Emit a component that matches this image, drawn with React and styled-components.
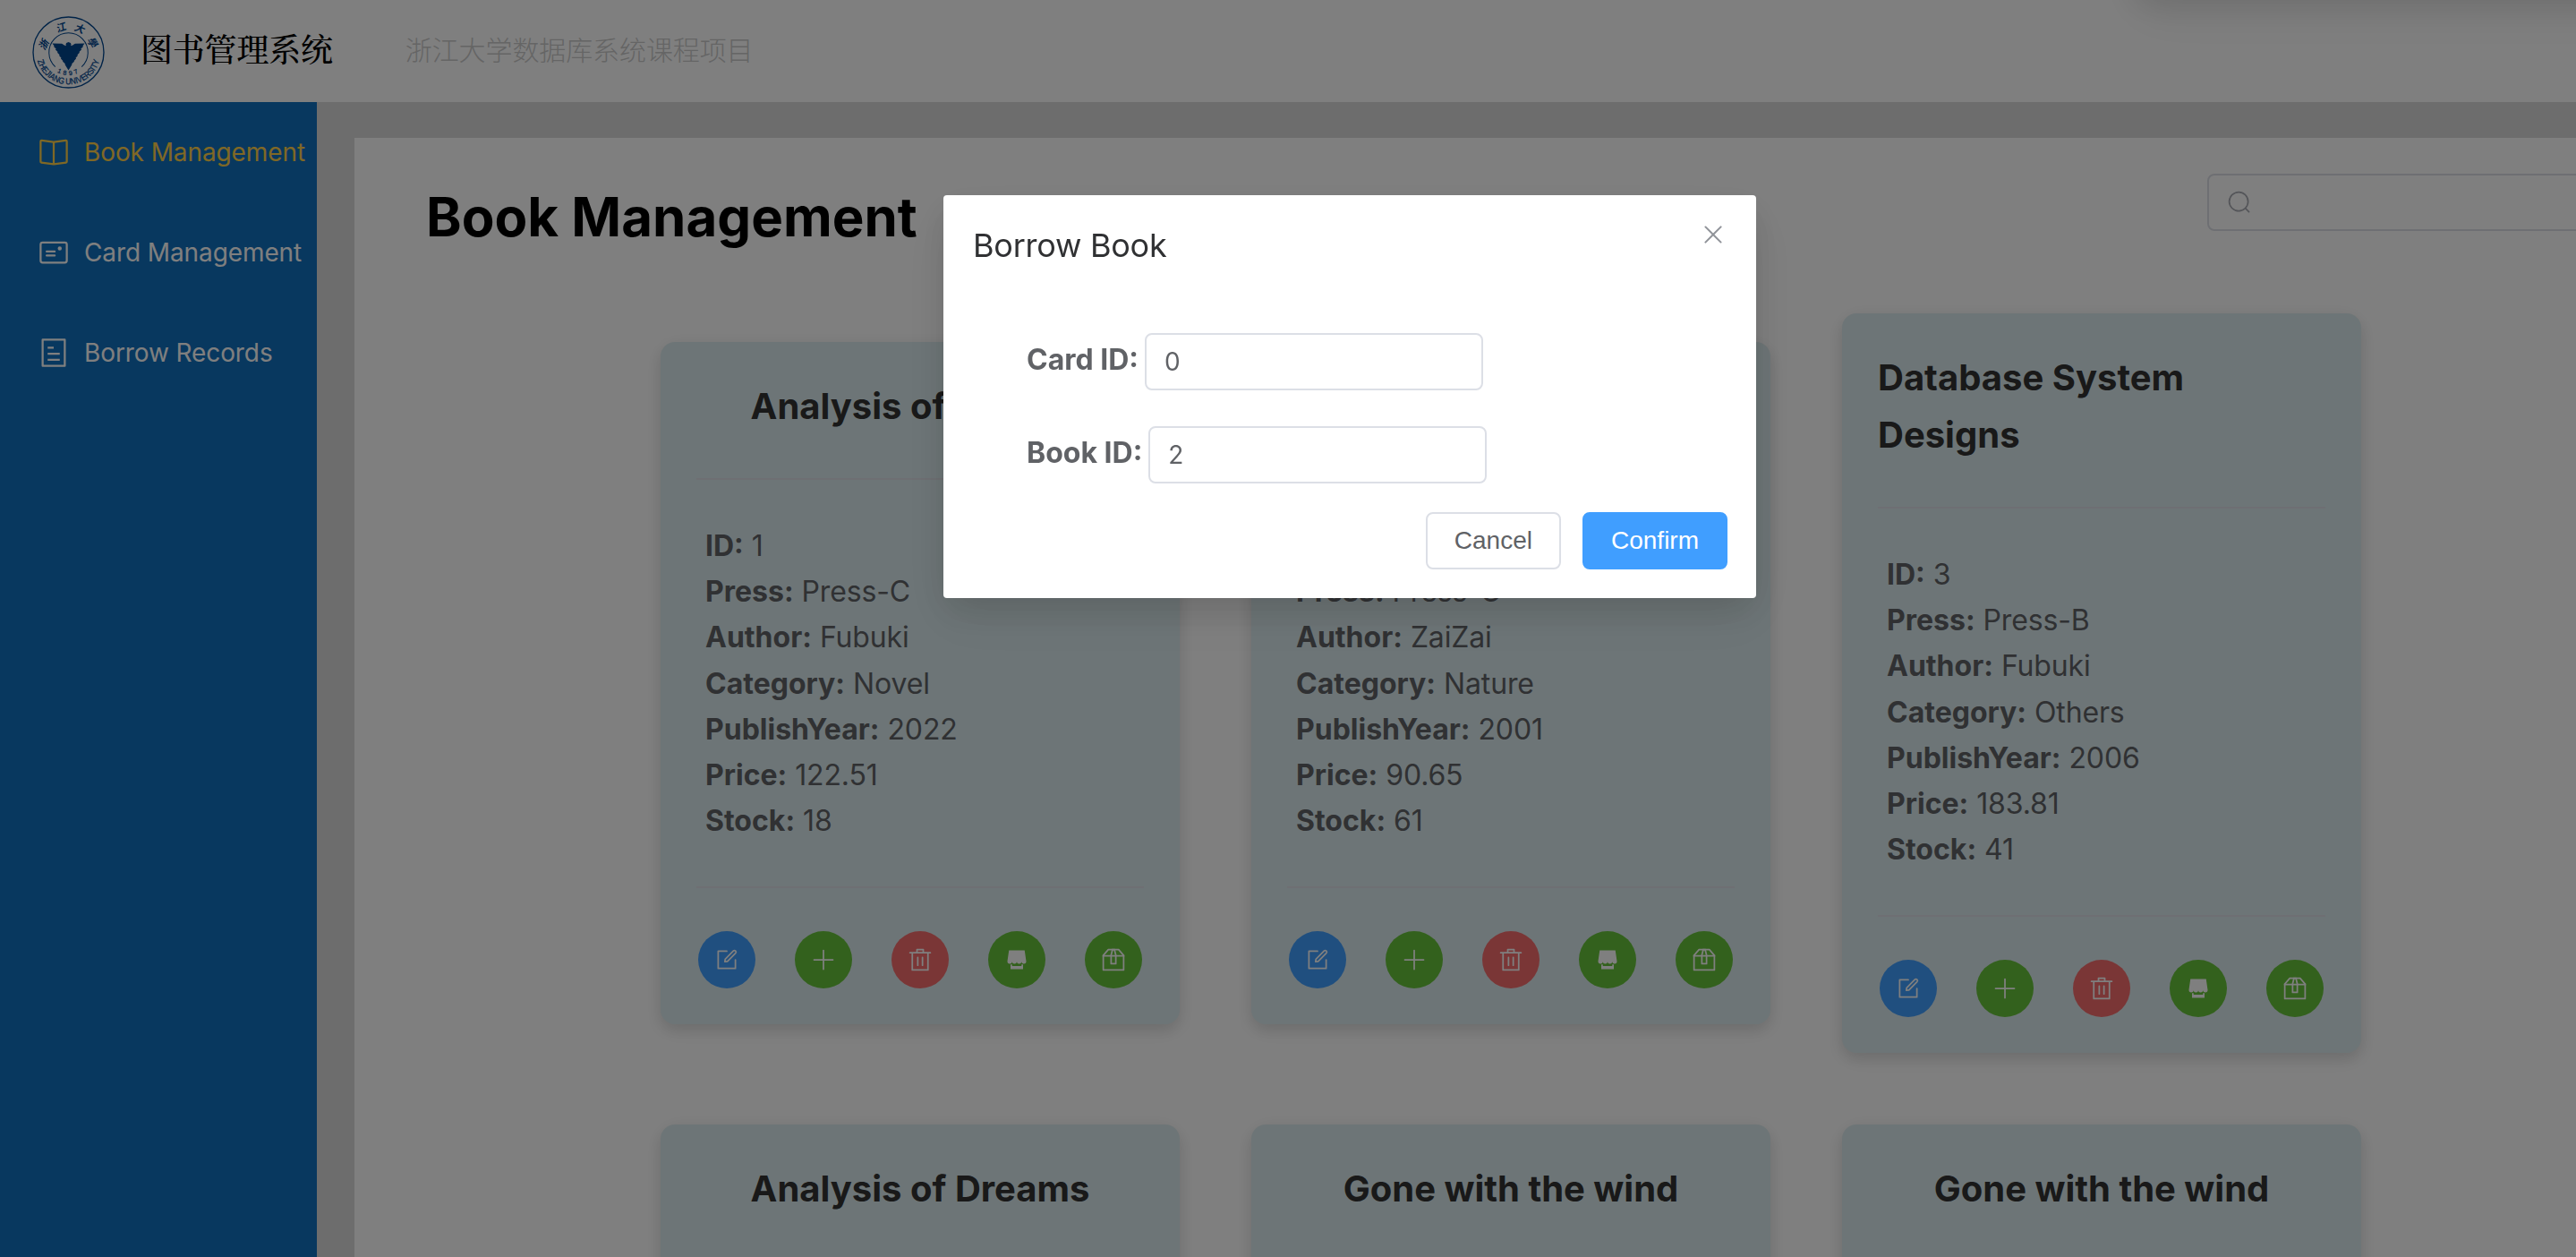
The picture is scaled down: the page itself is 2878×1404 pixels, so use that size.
import React from "react";
import styled, { createGlobalStyle } from "styled-components";

const GlobalStyle = createGlobalStyle`
  * { box-sizing: border-box; }
  body {
    margin: 0;
    overflow: hidden;
    font-family: Inter, "Noto Sans CJK SC", sans-serif;
    -webkit-font-smoothing: antialiased;
  }
`;

const ICONS = {
  reading: [
    "m512 863.36 384-54.848v-638.72L525.568 222.72a96 96 0 0 1-27.136 0L128 169.792v638.72zM137.024 106.432l370.432 52.928a32 32 0 0 0 9.088 0l370.432-52.928A64 64 0 0 1 960 169.792v638.72a64 64 0 0 1-54.976 63.36l-388.48 55.488a32 32 0 0 1-9.088 0l-388.48-55.488A64 64 0 0 1 64 808.512v-638.72a64 64 0 0 1 73.024-63.36z",
    "M480 192h64v704h-64z",
  ],
  postcard: [
    "M160 224a32 32 0 0 0-32 32v512a32 32 0 0 0 32 32h704a32 32 0 0 0 32-32V256a32 32 0 0 0-32-32zm0-64h704a96 96 0 0 1 96 96v512a96 96 0 0 1-96 96H160a96 96 0 0 1-96-96V256a96 96 0 0 1 96-96z",
    "M704 320a64 64 0 1 1 0 128 64 64 0 0 1 0-128zM288 448h256q32 0 32 32t-32 32H288q-32 0-32-32t32-32zm0 128h256q32 0 32 32t-32 32H288q-32 0-32-32t32-32z",
  ],
  tickets: [
    "M192 128v768h640V128zm-32-64h704a32 32 0 0 1 32 32v832a32 32 0 0 1-32 32H160a32 32 0 0 1-32-32V96a32 32 0 0 1 32-32zm160 448h384v64H320zm0-192h192v64H320zm0 384h384v64H320z",
  ],
  search: [
    "m795.904 750.72 124.992 124.928a32 32 0 0 1-45.248 45.248L750.656 795.904a416 416 0 1 1 45.248-45.248zM480 832a352 352 0 1 0 0-704 352 352 0 0 0 0 704z",
  ],
  close: [
    "M764.288 214.592 512 466.88 259.712 214.592a31.936 31.936 0 0 0-45.12 45.12L466.752 512 214.528 764.224a31.936 31.936 0 1 0 45.12 45.184L512 557.184l252.288 252.288a31.936 31.936 0 0 0 45.12-45.12L557.12 512.064l252.288-252.352a31.936 31.936 0 1 0-45.12-45.184z",
  ],
  edit: [
    "M832 512a32 32 0 1 1 64 0v352a32 32 0 0 1-32 32H160a32 32 0 0 1-32-32V160a32 32 0 0 1 32-32h352a32 32 0 0 1 0 64H192v640h640z",
    "m469.952 554.24 52.8-7.552L847.104 222.4a32 32 0 1 0-45.248-45.248L477.44 501.44l-7.552 52.8zm422.4-422.4a96 96 0 0 1 0 135.808l-331.84 331.84a32 32 0 0 1-18.112 9.088L436.8 623.68a32 32 0 0 1-36.224-36.224l15.104-105.6a32 32 0 0 1 9.024-18.112l331.904-331.84a96 96 0 0 1 135.744 0z",
  ],
  plus: [
    "M480 480V128a32 32 0 0 1 64 0v352h352a32 32 0 1 1 0 64H544v352a32 32 0 1 1-64 0V544H128a32 32 0 0 1 0-64z",
  ],
  trash: [
    "M160 256H96a32 32 0 0 1 0-64h256V95.936a32 32 0 0 1 32-32h256a32 32 0 0 1 32 32V192h256a32 32 0 1 1 0 64h-64v672a32 32 0 0 1-32 32H192a32 32 0 0 1-32-32zm448-64v-64H416v64zM224 896h576V256H224zm192-128a32 32 0 0 1-32-32V416a32 32 0 0 1 64 0v320a32 32 0 0 1-32 32zm192 0a32 32 0 0 1-32-32V416a32 32 0 0 1 64 0v320a32 32 0 0 1-32 32z",
  ],
  shop: [
    "M704 704h64v192H256V704h64v64h384zm188.544-152.192C894.528 559.616 896 567.616 896 576a96 96 0 1 1-192 0 96 96 0 1 1-192 0 96 96 0 1 1-192 0 96 96 0 1 1-192 0c0-8.384 1.408-16.384 3.392-24.192L192 128h640z",
  ],
  box: [
    "M317.056 128 128 344.064V896h768V344.064L706.944 128zm-14.528-64h418.944a32 32 0 0 1 24.064 10.88l206.528 236.096A32 32 0 0 1 960 332.032V928a32 32 0 0 1-32 32H96a32 32 0 0 1-32-32V332.032a32 32 0 0 1 7.936-21.12L278.4 75.008A32 32 0 0 1 302.528 64z",
    "M64 320h896v64H64z",
    "M448 327.872V640h128V327.872L526.08 128h-28.16zM448 64h128l64 256v352a32 32 0 0 1-32 32H416a32 32 0 0 1-32-32V320z",
  ],
};

const Glyph = styled.svg`
  width: ${(p) => p.$size}px;
  height: ${(p) => p.$size}px;
  fill: currentColor;
  flex: none;
  display: block;
`;

function Icon({ name, size = 28 }) {
  return (
    <Glyph viewBox="0 0 1024 1024" $size={size} aria-hidden="true">
      {ICONS[name].map((d) => (
        <path key={d} d={d} />
      ))}
    </Glyph>
  );
}

const Page = styled.div`
  width: 100vw;
  height: 100vh;
  overflow: hidden;
  display: flex;
  flex-direction: column;
  background: #fff;
`;

const TopBar = styled.header`
  height: 114px;
  flex: none;
  display: flex;
  align-items: center;
  padding-left: 36px;
  background: #fff;
`;

const Emblem = styled.svg`
  width: 81px;
  height: 81px;
  margin-top: 2px;
  flex: none;
  color: #00468f;
`;

const SystemName = styled.span`
  margin: 0 0 7px 40px;
  font-family: "Songti SC", "Noto Serif CJK SC", "Noto Sans CJK SC", serif;
  font-size: 36px;
  line-height: 50px;
  letter-spacing: -0.2px;
  font-weight: 500;
  color: #000;
  white-space: nowrap;
`;

const CourseName = styled.span`
  margin: 0 0 7px 81px;
  font-family: "Noto Sans CJK SC", sans-serif;
  font-size: 30px;
  line-height: 44px;
  letter-spacing: -0.1px;
  font-weight: 300;
  color: #cacaca;
  white-space: nowrap;
`;

const Body = styled.div`
  flex: 1;
  min-height: 0;
  display: flex;
  background: #dadada;
`;

const SideMenu = styled.nav`
  width: 354px;
  flex: none;
  background: #1070be;
`;

const MenuItem = styled.a`
  height: 112px;
  display: flex;
  align-items: center;
  padding-left: 42px;
  gap: 16px;
  font-size: 28px;
  letter-spacing: -0.1px;
  white-space: nowrap;
  color: ${(p) => (p.$active ? "#ffd04b" : "#fff")};
`;

const Content = styled.main`
  width: 2584px;
  flex: none;
  margin: 40px 0 0 42px;
  background: #fff;
`;

const PageHead = styled.div`
  height: 156px;
  display: flex;
  justify-content: space-between;
  padding: 40px 94px 0 80px;
`;

const Heading = styled.h1`
  margin: 12px 0 0;
  font-size: 60px;
  line-height: 72px;
  font-weight: 700;
  color: #000;
  white-space: nowrap;
`;

const SearchBox = styled.div`
  width: 420px;
  height: 64px;
  display: flex;
  align-items: center;
  padding-left: 20px;
  border: 2px solid #dcdfe6;
  border-radius: 8px;
  color: #a8abb2;
`;

const CardGrid = styled.div`
  display: grid;
  grid-template-columns: repeat(3, 580px);
  justify-content: center;
  align-items: center;
  gap: 80px;
  padding-top: 40px;
`;

const Card = styled.article`
  padding: 40px;
  display: flex;
  flex-direction: column;
  border-radius: 16px;
  background: #dbebee;
  box-shadow: 0 8px 16px rgba(0, 0, 0, 0.1), 0 4px 24px rgba(0, 0, 0, 0.06);
`;

const CardTitle = styled.h2`
  margin: 0;
  align-self: center;
  font-size: 40px;
  line-height: 64px;
  font-weight: 700;
  color: #333;
`;

const Divider = styled.div`
  height: 2px;
  margin: 48px 0;
  background: #dcdfe6;
`;

const Details = styled.dl`
  margin: 0;
  padding-left: 10px;
  font-size: 32px;
  line-height: 51.2px;
  color: #606266;
`;

const Detail = styled.div`
  dt {
    display: inline;
    font-weight: 700;
  }
  dd {
    display: inline;
    margin: 0;
    letter-spacing: -0.15px;
  }
`;

const Actions = styled.div`
  display: flex;
  justify-content: center;
  gap: 44px;
`;

const TONES = { primary: "#409eff", success: "#67c23a", danger: "#f56c6c" };

const RoundButton = styled.button`
  width: 64px;
  height: 64px;
  padding: 0;
  display: flex;
  align-items: center;
  justify-content: center;
  border: 0;
  border-radius: 50%;
  background: ${(p) => TONES[p.$tone]};
  color: #fff;
`;

const Overlay = styled.div`
  position: fixed;
  inset: 0;
  display: flex;
  justify-content: flex-start;
  align-items: flex-start;
  padding: 218px 0 0 1054px;
  background: rgba(0, 0, 0, 0.5);
`;

const Dialog = styled.section`
  width: 908px;
  height: 450px;
  display: flex;
  flex-direction: column;
  padding: 32px;
  border-radius: 4px;
  background: #fff;
  box-shadow: 0 24px 64px 8px rgba(0, 0, 0, 0.04), 0 16px 40px rgba(0, 0, 0, 0.08),
    0 16px 48px rgba(0, 0, 0, 0.06);
`;

const DialogHead = styled.div`
  display: flex;
  justify-content: space-between;
  flex: none;
  height: 122px;
`;

const DialogTitle = styled.h3`
  margin: 0;
  padding-left: 1px;
  font-size: 36px;
  line-height: 48px;
  letter-spacing: -0.25px;
  font-weight: 400;
  color: #303133;
`;

const CloseButton = styled.button`
  width: 32px;
  height: 32px;
  margin: -4px 0 0;
  padding: 0;
  border: 0;
  background: none;
  color: #909399;
`;

const Field = styled.label`
  display: flex;
  flex: none;
  gap: 7px;
  height: 64px;
  margin: 0 0 40px 61px;
  font-size: 32px;
  line-height: 60px;
  font-weight: 700;
  color: #606266;
  white-space: nowrap;
`;

const TextInput = styled.input`
  width: 378px;
  height: 64px;
  padding: 0 20px;
  border: 2px solid #dcdfe6;
  border-radius: 8px;
  outline: none;
  font-family: inherit;
  font-size: 28px;
  color: #606266;
  background: #fff;
`;

const DialogFoot = styled.div`
  display: flex;
  justify-content: flex-end;
  flex: none;
  gap: 24px;
  margin-top: -8px;
`;

const Button = styled.button`
  height: 64px;
  padding: 0 30px;
  border: 2px solid ${(p) => (p.$primary ? "#409eff" : "#dcdfe6")};
  border-radius: 8px;
  background: ${(p) => (p.$primary ? "#409eff" : "#fff")};
  color: ${(p) => (p.$primary ? "#fff" : "#606266")};
  font-family: "Liberation Sans", Arial, sans-serif;
  font-size: 28px;
  line-height: 28px;
`;

const Toast = styled.div`
  position: fixed;
  top: -160px;
  left: 2386px;
  width: 660px;
  height: 150px;
  border-radius: 16px;
  background: #fff;
  box-shadow: 0 24px 64px 8px rgba(0, 0, 0, 0.04), 0 16px 40px rgba(0, 0, 0, 0.13);
`;

const MENU = [
  { icon: "reading", label: "Book Management", active: true },
  { icon: "postcard", label: "Card Management" },
  { icon: "tickets", label: "Borrow Records" },
];

const ACTIONS = [
  ["edit", "primary"],
  ["plus", "success"],
  ["trash", "danger"],
  ["shop", "success"],
  ["box", "success"],
];

const book = (id, title, press, author, category, year, price, stock) => ({
  title,
  details: [
    ["ID", id],
    ["Press", press],
    ["Author", author],
    ["Category", category],
    ["PublishYear", year],
    ["Price", price],
    ["Stock", stock],
  ],
});

const BOOKS = [
  book("1", "Analysis of Dreams", "Press-C", "Fubuki", "Novel", "2022", "122.51", "18"),
  book("2", "Gone with the wind", "Press-C", "ZaiZai", "Nature", "2001", "90.65", "61"),
  book("3", "Database System Designs", "Press-B", "Fubuki", "Others", "2006", "183.81", "41"),
];

// The next row only shows its headings above the fold.
const NEXT_ROW = ["Analysis of Dreams", "Gone with the wind", "Gone with the wind"];

const HALF_EAGLE = [
  [7, 90], [9, 94], [8, 99], [14, 97], [22, 92], [54, 91], [47, 100], [50, 101],
  [41, 110], [44, 111], [35, 120], [38, 121], [29, 130], [32, 131], [24, 140],
  [26, 141], [18, 150], [20, 151], [11, 159], [12, 161], [0, 181],
];
const EAGLE_POINTS = [
  [0, 87],
  ...HALF_EAGLE,
  ...HALF_EAGLE.slice(0, -1).reverse().map(([x, y]) => [-x, y]),
]
  .map(([x, y]) => `${121 + x},${y}`)
  .join(" ");

function UniversityEmblem() {
  return (
    <Emblem viewBox="0 0 242 242" fill="currentColor">
      <defs>
        <path id="ring-name" d="M14 121a107 107 0 0 0 214 0" />
        <path id="ring-year" d="M45 121a76 76 0 0 0 152 0" />
      </defs>
      <circle cx="121" cy="121" r="118" fill="none" stroke="currentColor" strokeWidth="4" />
      <path d="M77 169a65 65 0 1 1 88 0" fill="none" stroke="currentColor" strokeWidth="3" />
      <polygon points={EAGLE_POINTS} />
      <g fontFamily="'Noto Sans CJK SC', sans-serif" fontWeight="700" textAnchor="middle">
        <text fontSize="33" transform="translate(39 93) rotate(-62) skewX(-10)" y="12">浙</text>
        <text fontSize="33" transform="translate(98 37) rotate(-18) skewX(-10)" y="12">江</text>
        <text fontSize="33" transform="translate(160 42) rotate(22) skewX(-10)" y="12">大</text>
        <text fontSize="33" transform="translate(202 89) rotate(60) skewX(-10)" y="12">學</text>
      </g>
      <text fontFamily="'Liberation Sans', sans-serif" fontSize="29">
        <textPath
          href="#ring-name"
          startOffset="28"
          textLength="280"
          lengthAdjust="spacingAndGlyphs"
          stroke="currentColor"
          strokeWidth="0.8"
        >
          ZHEJIANG UNIVERSITY
        </textPath>
      </text>
      <text fontFamily="'Liberation Sans', sans-serif" fontSize="21" letterSpacing="9">
        <textPath href="#ring-year" startOffset="80" stroke="currentColor" strokeWidth="0.8">
          1897
        </textPath>
      </text>
    </Emblem>
  );
}

function BookCard({ title, details }) {
  return (
    <Card>
      <CardTitle>{title}</CardTitle>
      <Divider />
      <Details>
        {details.map(([name, value]) => (
          <Detail key={name}>
            <dt>{name}:</dt> <dd>{value}</dd>
          </Detail>
        ))}
      </Details>
      <Divider />
      <Actions>
        {ACTIONS.map(([icon, tone]) => (
          <RoundButton key={icon} $tone={tone}>
            <Icon name={icon} />
          </RoundButton>
        ))}
      </Actions>
    </Card>
  );
}

function CardPreview({ title }) {
  return (
    <Card>
      <CardTitle>{title}</CardTitle>
      <Divider />
    </Card>
  );
}

export default function App() {
  return (
    <>
      <GlobalStyle />
      <Page>
        <TopBar>
          <UniversityEmblem />
          <SystemName>图书管理系统</SystemName>
          <CourseName>浙江大学数据库系统课程项目</CourseName>
        </TopBar>
        <Body>
          <SideMenu>
            {MENU.map((m) => (
              <MenuItem key={m.label} $active={m.active}>
                <Icon name={m.icon} size={36} />
                {m.label}
              </MenuItem>
            ))}
          </SideMenu>
          <Content>
            <PageHead>
              <Heading>Book Management</Heading>
              <SearchBox>
                <Icon name="search" />
              </SearchBox>
            </PageHead>
            <CardGrid>
              {BOOKS.map((b) => (
                <BookCard key={b.details[0][1]} {...b} />
              ))}
              {NEXT_ROW.map((title, i) => (
                <CardPreview key={i} title={title} />
              ))}
            </CardGrid>
          </Content>
        </Body>
      </Page>
      <Toast />
      <Overlay>
        <Dialog>
          <DialogHead>
            <DialogTitle>Borrow Book</DialogTitle>
            <CloseButton aria-label="Close">
              <Icon name="close" size={32} />
            </CloseButton>
          </DialogHead>
          <Field>
            Card ID:
            <TextInput defaultValue="0" />
          </Field>
          <Field>
            Book ID:
            <TextInput defaultValue="2" />
          </Field>
          <DialogFoot>
            <Button>Cancel</Button>
            <Button $primary>Confirm</Button>
          </DialogFoot>
        </Dialog>
      </Overlay>
    </>
  );
}
